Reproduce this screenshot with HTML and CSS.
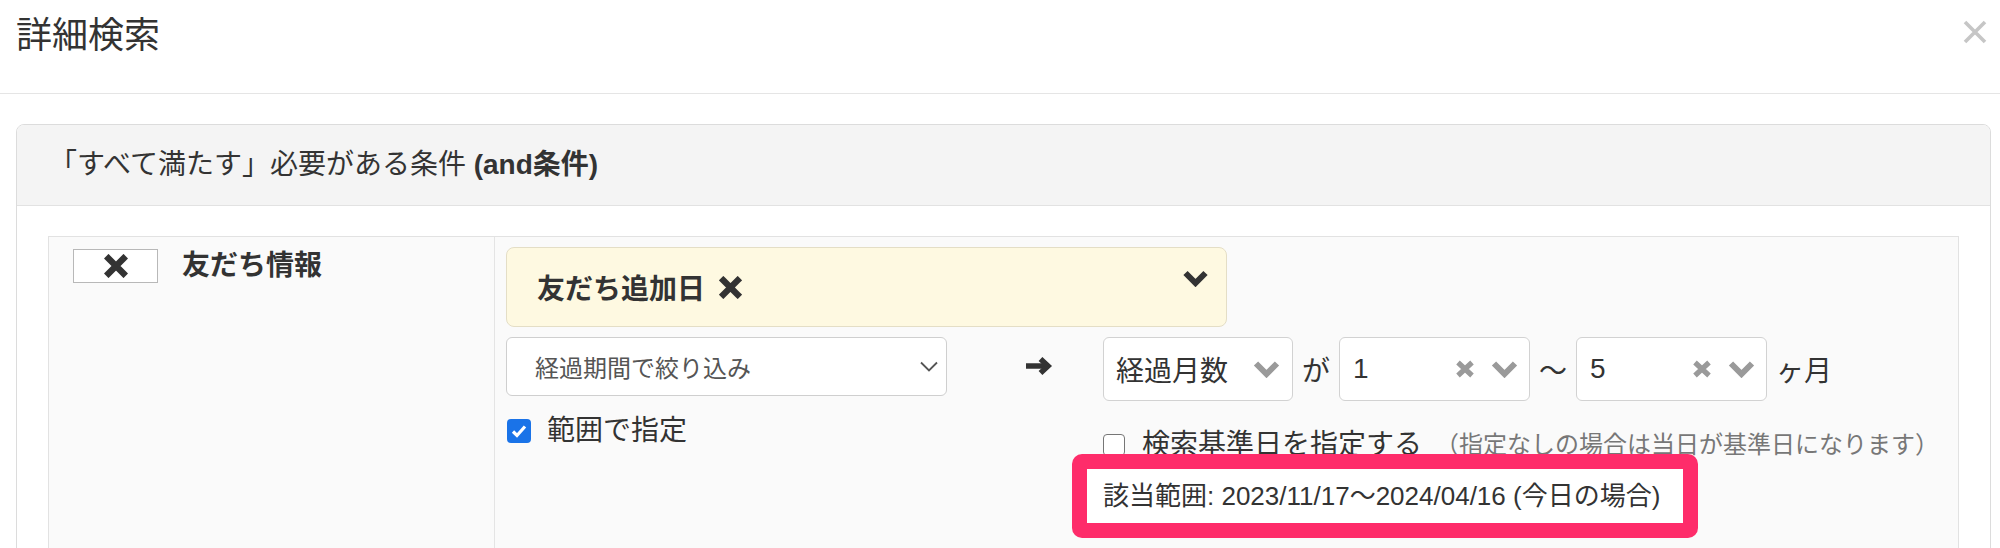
FILE: index.html
```html
<!DOCTYPE html>
<html lang="ja">
<head>
    <meta charset="UTF-8">
    <meta name="viewport" content="width=device-width, initial-scale=1.0">
    <title>詳細検索</title>
    <link rel="stylesheet" href="styles.css">
</head>
<body>
    <div class="modal">
        <div class="modal-header">
            <h4 class="modal-title">詳細検索</h4>
            <button class="close-btn" type="button" aria-label="閉じる">
                <svg width="24" height="24" viewBox="0 0 24 24"><path d="M2 2L22 22M22 2L2 22" stroke="#c6c6c6" stroke-width="3.6" fill="none"/></svg>
            </button>
        </div>

        <div class="modal-body">
            <div class="panel">
                <div class="panel-heading">「すべて満たす」必要がある条件 <b>(and条件)</b></div>
                <div class="panel-body">
                    <div class="cond-row">
                        <div class="cond-label">
                            <button class="remove-btn" type="button">
                                <svg width="24" height="24" viewBox="0 0 24 24"><path d="M4.5 4.5L19.5 19.5M19.5 4.5L4.5 19.5" stroke="#333" stroke-width="6.5" stroke-linecap="square" fill="none"/></svg>
                            </button>
                            <span class="cond-name">友だち情報</span>
                        </div>

                        <div class="cond-main">
                            <div class="field-box">
                                <span class="field-name">友だち追加日</span>
                                <svg class="field-remove" width="23" height="23" viewBox="0 0 24 24"><path d="M4.5 4.5L19.5 19.5M19.5 4.5L4.5 19.5" stroke="#333" stroke-width="6.5" stroke-linecap="square" fill="none"/></svg>
                                <svg class="field-toggle" width="25" height="17" viewBox="0 0 25 17"><path d="M2.5 3L12.5 13L22.5 3" stroke="#333" stroke-width="6" fill="none"/></svg>
                            </div>

                            <div class="filter-grid">
                                <div class="filter-left">
                                    <div class="native-select">
                                        <span>経過期間で絞り込み</span>
                                        <svg width="18" height="11" viewBox="0 0 18 11"><path d="M1 1.5L9 9.5L17 1.5" stroke="#555" stroke-width="1.8" fill="none"/></svg>
                                    </div>
                                    <label class="check">
                                        <span class="box checked">
                                            <svg width="24" height="24" viewBox="0 0 24 24"><path d="M6 12.5L10 16.5L18 7.5" stroke="#fff" stroke-width="3.2" fill="none"/></svg>
                                        </span>
                                        範囲で指定
                                    </label>
                                </div>

                                <div class="filter-arrow">
                                    <svg width="28" height="18" viewBox="0 0 28 18"><path d="M1 9H23" stroke="#333" stroke-width="5.5" fill="none"/><path d="M15.5 2L23 9L15.5 16" stroke="#333" stroke-width="5.5" fill="none"/></svg>
                                </div>

                                <div class="filter-right">
                                    <div class="select-row">
                                        <div class="rs-select unit">
                                            <span class="rs-value">経過月数</span>
                                            <svg class="rs-chevron" width="27" height="18" viewBox="0 0 27 18"><path d="M3 3.5L13.5 14L24 3.5" stroke="#9a9a9a" stroke-width="6" fill="none"/></svg>
                                        </div>
                                        <span class="joiner">が</span>
                                        <div class="rs-select">
                                            <span class="rs-value num">1</span>
                                            <svg class="rs-clear" width="20" height="18" viewBox="0 0 20 18"><path d="M3 2.5L17 15.5M17 2.5L3 15.5" stroke="#9a9a9a" stroke-width="5.2" fill="none"/></svg>
                                            <svg class="rs-chevron" width="27" height="18" viewBox="0 0 27 18"><path d="M3 3.5L13.5 14L24 3.5" stroke="#9a9a9a" stroke-width="6" fill="none"/></svg>
                                        </div>
                                        <span class="joiner">〜</span>
                                        <div class="rs-select">
                                            <span class="rs-value num">5</span>
                                            <svg class="rs-clear" width="20" height="18" viewBox="0 0 20 18"><path d="M3 2.5L17 15.5M17 2.5L3 15.5" stroke="#9a9a9a" stroke-width="5.2" fill="none"/></svg>
                                            <svg class="rs-chevron" width="27" height="18" viewBox="0 0 27 18"><path d="M3 3.5L13.5 14L24 3.5" stroke="#9a9a9a" stroke-width="6" fill="none"/></svg>
                                        </div>
                                        <span class="joiner">ヶ月</span>
                                    </div>

                                    <label class="check check-base">
                                        <span class="box"></span>
                                        検索基準日を指定する
                                        <span class="hint">（指定なしの場合は当日が基準日になります）</span>
                                    </label>

                                    <div class="range-mark">
                                        <div class="range-text">該当範囲: 2023/11/17〜2024/04/16 (今日の場合)</div>
                                    </div>
                                </div>
                            </div>
                        </div>
                    </div>
                </div>
            </div>
        </div>
    </div>
</body>
</html>
```

FILE: styles.css
```css
body {
    margin: 0;
    padding: 0;
    font-family: "Liberation Sans", "Noto Sans CJK JP", sans-serif;
    color: #333;
    background: #ffffff;
    overflow: hidden;
}

.modal-header {
    height: 93px;
    border-bottom: 1px solid #e5e5e5;
    display: flex;
    justify-content: space-between;
    align-items: flex-start;
    padding: 0 13px 0 16px;
}

.modal-title {
    margin: 0;
    padding-top: 18px;
    font-size: 36px;
    line-height: 36px;
    font-weight: normal;
}

.close-btn {
    margin-top: 20px;
    padding: 0;
    border: none;
    background: none;
    width: 24px;
    height: 24px;
}

.close-btn svg {
    display: block;
}

.modal-body {
    padding: 30px 9px 0 16px;
}

.panel {
    border: 1px solid #dcdcdc;
    border-radius: 8px 8px 0 0;
    overflow: hidden;
}

.panel-heading {
    height: 80px;
    line-height: 80px;
    padding-left: 32px;
    font-size: 28px;
    background: #f4f4f4;
    border-bottom: 1px solid #e2e2e2;
}

.panel-body {
    padding: 30px 31px 0;
}

.cond-row {
    display: grid;
    grid-template-columns: 446px 1fr;
    border: 1px solid #e2e2e2;
    background: #fafafa;
}

.cond-label {
    display: flex;
    align-items: flex-start;
    gap: 24px;
    padding: 12px 0 0 24px;
    border-right: 1px solid #e4e4e4;
}

.remove-btn {
    width: 85px;
    height: 34px;
    padding: 0;
    border: 1px solid #b8b8b8;
    background: #fff;
    display: flex;
    align-items: center;
    justify-content: center;
}

.cond-name {
    font-size: 28px;
    line-height: 34px;
    font-weight: bold;
}

.cond-main {
    padding: 10px 12px 60px 11px;
}

.field-box {
    width: 721px;
    height: 80px;
    box-sizing: border-box;
    display: flex;
    align-items: center;
    padding: 0 18px 0 30px;
    background: #fef9e1;
    border: 1px solid #e4dec6;
    border-radius: 8px;
}

.field-name {
    font-size: 28px;
    font-weight: bold;
}

.field-remove {
    margin-left: 14px;
}

.field-toggle {
    margin-left: auto;
    align-self: flex-start;
    margin-top: 22px;
}

.filter-grid {
    display: grid;
    grid-template-columns: 441px 156px auto;
    margin-top: 10px;
}

.native-select {
    height: 59px;
    box-sizing: border-box;
    display: flex;
    align-items: center;
    justify-content: space-between;
    padding: 0 8px 0 28px;
    font-size: 24px;
    color: #555;
    background: #fff;
    border: 1px solid #cfcfcf;
    border-radius: 6px;
}

.check {
    display: flex;
    align-items: center;
    gap: 16px;
    margin-top: 19px;
    font-size: 28px;
    line-height: 32px;
}

.box {
    width: 22px;
    height: 22px;
    box-sizing: border-box;
    border: 1px solid #767676;
    border-radius: 4px;
    background: #fff;
    flex-shrink: 0;
}

.box.checked {
    width: 24px;
    height: 24px;
    border: none;
    background: #1a73e8;
    margin-left: 1px;
}

.box svg {
    display: block;
}

.filter-arrow {
    padding: 20px 0 0 78px;
}

.select-row {
    display: flex;
    align-items: center;
    gap: 9px;
}

.rs-select {
    width: 191px;
    height: 64px;
    box-sizing: border-box;
    display: flex;
    align-items: center;
    padding: 0 11px 0 13px;
    background: #fff;
    border: 1px solid #d2d2d2;
    border-radius: 6px;
}

.rs-select.unit {
    width: 190px;
    padding-left: 12px;
    padding-right: 12px;
}

.rs-value {
    flex: 1;
    font-size: 28px;
}

.rs-clear {
    margin-right: 16px;
}

.joiner {
    font-size: 28px;
}

.check-base {
    margin-top: 24px;
    line-height: 40px;
    gap: 17px;
    white-space: nowrap;
}

.hint {
    margin-left: -4px;
    font-size: 24px;
    color: #777;
}

.range-mark {
    position: relative;
    width: fit-content;
    margin: -11px 0 0 -31px;
    padding: 15px;
    background: #fe2c6a;
    border-radius: 10px;
}

.range-text {
    width: 596px;
    height: 54px;
    box-sizing: border-box;
    padding-left: 16px;
    line-height: 54px;
    font-size: 26px;
    white-space: nowrap;
    background: #fff;
}
```
